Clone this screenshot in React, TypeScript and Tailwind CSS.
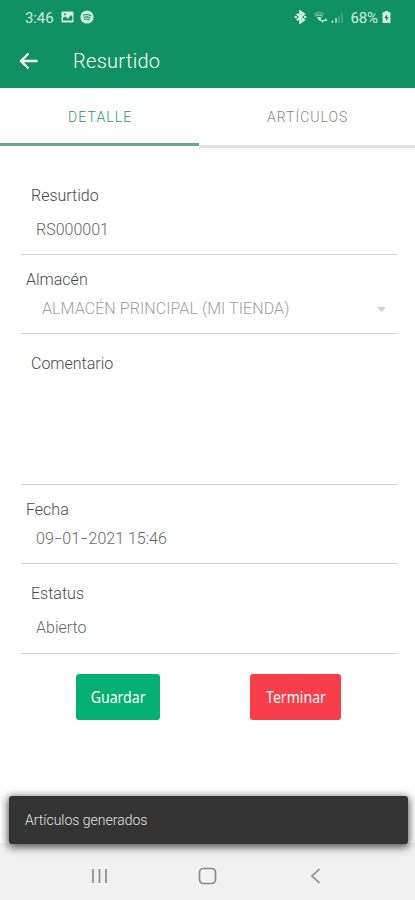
import clsx from "clsx";
import type { ReactNode } from "react";

type FieldProps = {
  label: string;
  value?: ReactNode;
  className: string;
  labelClass?: string;
  valueClass?: string;
  select?: boolean;
};

function StatusBar() {
  return (
    <div className="flex h-[34px] items-center pl-[25px] pr-[24px] text-[#d3eee2]">
      <span className="mt-px text-[15px] leading-4 tracking-[-0.1px]">3:46</span>
      <svg className="ml-[7px]" width="13" height="12" viewBox="0 0 13 12">
        <rect x="0.5" y="0.5" width="12" height="11" rx="1" fill="currentColor" />
        <path d="M2 9.5V7l2.2-1.5L7 8l3-4 1.3 1.6v3.9z" fill="#0f9163" />
        <circle cx="4" cy="3.3" r="1" fill="#0f9163" />
      </svg>
      <svg className="ml-[6px]" width="14" height="14" viewBox="0 0 14 14">
        <circle cx="7" cy="7" r="6.6" fill="currentColor" />
        <path
          d="M3.4 5c2.6-.8 5.2-.5 7.4.7M3.8 7.2c2.2-.6 4.4-.3 6.2.7M4.2 9.2c1.8-.4 3.5-.2 4.9.6"
          fill="none"
          stroke="#0f9163"
          strokeWidth="1.1"
          strokeLinecap="round"
        />
      </svg>
      <svg className="ml-auto" width="13" height="14" viewBox="0 0 13 14">
        <path d="M2.8 3.8l7 6.2L6.2 12.6V1.4L9.800 4l-7 6.200" fill="none" stroke="currentColor" strokeWidth="2.2" />
        <circle cx="1.8" cy="7" r="1.3" fill="currentColor" />
        <circle cx="11.2" cy="7" r="1.3" fill="currentColor" />
      </svg>
      <svg className="ml-[6px]" width="15" height="13" viewBox="0 0 15 13">
        <path d="M1 3.4C4 .9 8 .9 11 3.4" fill="none" stroke="currentColor" strokeOpacity="0.4" strokeWidth="1.3" />
        <path d="M2.4 5.2c2.2-1.6 4.8-1.6 7 0" fill="none" stroke="currentColor" strokeOpacity="0.7" strokeWidth="1.3" />
        <path d="M3.8 6.8c1.5-1 3-1 4.500 0L7.500 10.500z" fill="currentColor" />
        <path d="M8.3 9.3h2.400L9.500 11.500zM11.300 9.800h2.600l-1.300-2.200z" fill="currentColor" stroke="currentColor" strokeWidth="0.6" />
      </svg>
      <svg className="ml-[3px]" width="12" height="13" viewBox="0 0 12 13">
        <path d="M1.5 9.5V12M5 7v5" stroke="currentColor" strokeWidth="1.3" />
        <path d="M8 4.5V12M11 1.5V12" stroke="currentColor" strokeOpacity="0.3" strokeWidth="1.4" />
      </svg>
      <span className="ml-[7px] mt-px text-[15px] leading-4 tracking-[-0.1px]">68%</span>
      <svg className="ml-[4px]" width="9" height="12" viewBox="0 0 9 12">
        <path d="M2.8 0h3.4v1.3H8.5V12H.5V1.3h2.300z" fill="currentColor" />
        <path d="M4.5 3.5L2.5 7h1.600L4 10l2.600-3.800H5z" fill="#0f7350" />
      </svg>
    </div>
  );
}

function Field({ label, value, className, labelClass, valueClass, select }: FieldProps) {
  return (
    <div className={clsx("border-b border-[#d2d2d2] font-light leading-6", className)}>
      <div className={clsx("text-base text-[#484848]", labelClass)}>{label}</div>
      {value && (
        <div className={clsx("flex items-center justify-between text-base", valueClass)}>
          <span>{value}</span>
          {select && (
            <svg className="mr-[11px]" width="9" height="5" viewBox="0 0 9 5">
              <path d="M0 0h9L4.5 5z" fill="#cfcfcf" />
            </svg>
          )}
        </div>
      )}
    </div>
  );
}

// Date parts are separated by wide hyphens
const dash = <span className="inline-block w-[8.5px] scale-x-150 text-center">-</span>;

export default function App() {
  return (
    <div className="flex h-[900px] w-[415px] flex-col overflow-hidden bg-white font-[Roboto,sans-serif] whitespace-nowrap">
      <header className="h-[88px] bg-[#0f9163]">
        <StatusBar />
        <div className="flex h-[54px] items-center pl-[19px] text-white">
          <svg width="20" height="18" viewBox="0 0 20 18">
            <path d="M18.5 9H2.5M9.5 1.5L2 9l7.500 7.500" fill="none" stroke="white" strokeWidth="2.3" />
          </svg>
          <h1 className="ml-[34px] text-[20px] font-light leading-6 tracking-[0.3px]">Resurtido</h1>
        </div>
      </header>

      <nav className="flex h-[60px] text-sm leading-5">
        <div className="w-[199px] pb-[2px]">
          <div className="h-full border-b-[3px] border-[#67a88d] pt-[19px] pl-[68px] font-light tracking-[1.1px] text-[#2f9270]">DETALLE</div>
        </div>
        <div className="flex-1 border-b-[3px] border-[#e2e2e2] pt-[19px] pl-[68px] font-light tracking-[1px] text-[#858585]">ARTÍCULOS</div>
      </nav>

      <main className="flex flex-1 flex-col pl-[21px] pr-[18px]">
        <Field label="Resurtido" value="RS000001" className="h-[107px] pt-[36px]" labelClass="pl-[10px]" valueClass="mt-[10px] pl-[15px] text-[#666]" />
        <Field label="Almacén" value="ALMACÉN PRINCIPAL (MI TIENDA)" className="h-[79px] pt-[13px]" labelClass="pl-[5px]" valueClass="mt-[5px] pl-[21px] tracking-[0.08px] text-[#a0a0a0]" select />
        <Field label="Comentario" className="h-[151px] pt-[18px]" labelClass="pl-[10px]" />
        <Field
          label="Fecha"
          value={<>09{dash}01{dash}2021 15:46</>}
          className="h-[79px] pt-[13px]"
          labelClass="pl-[5px]"
          valueClass="mt-[5px] pl-[15px] text-[#666]"
        />
        <Field label="Estatus" value="Abierto" className="h-[90px] pt-[18px]" labelClass="pl-[10px]" valueClass="mt-[10px] pl-[15px] text-[#666]" />

        <div className="mt-[20px] flex gap-[90px] pl-[55px] font-['Noto_Sans',sans-serif] text-base text-white">
          <button className="flex h-[46px] w-[84px] items-center justify-center rounded-[3px] bg-[#04b072]">
            <span className="scale-x-[0.88]">Guardar</span>
          </button>
          <button className="flex h-[46px] w-[91px] items-center justify-center rounded-[3px] bg-[#f73e4a]">
            <span className="scale-x-[0.88]">Terminar</span>
          </button>
        </div>
      </main>

      <div className="relative mr-[7px] ml-[9px] flex h-[48px] items-center rounded-[3px] bg-[#333] pl-[16px] text-sm font-light text-[#e4e4e4] shadow-[0_2px_8px_1px_rgba(0,0,0,0.7)]">
        Artículos generados
      </div>

      <footer className="-mt-[1px] flex h-[57px] items-center bg-[#f1f1f1] pt-[8px] text-[#8c8c8c]">
        <svg className="ml-[91px]" width="17" height="16" viewBox="0 0 17 16">
          <path d="M2 1v14M8.5 1v14M15 1v14" stroke="currentColor" strokeWidth="1.7" />
        </svg>
        <svg className="ml-[90px]" width="19" height="18" viewBox="0 0 19 18">
          <rect x="1.5" y="1.5" width="16" height="15" rx="4" fill="none" stroke="currentColor" strokeWidth="1.7" />
        </svg>
        <svg className="ml-[93px]" width="12" height="16" viewBox="0 0 12 16">
          <path d="M9.5 1L2 8l7.5 7" fill="none" stroke="currentColor" strokeWidth="1.7" />
        </svg>
      </footer>
    </div>
  );
}
